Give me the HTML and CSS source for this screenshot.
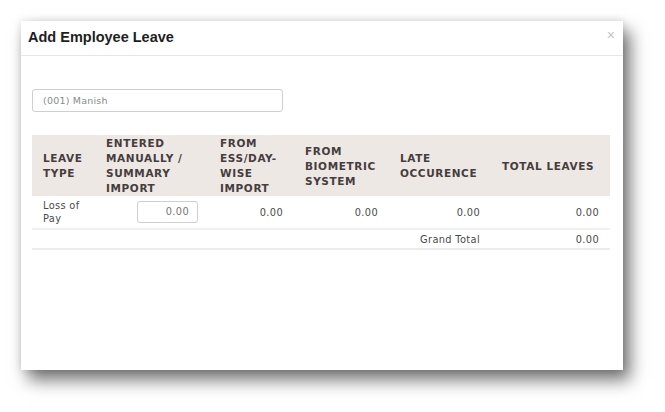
FILE: index.html
```html
<!DOCTYPE html>
<html>
<head>
<meta charset="utf-8">
<link rel="stylesheet" href="styles.css">
</head>
<body>
<div class="modal">
  <div class="modal-header">
    <h1 class="modal-title">Add Employee Leave</h1>
    <span class="close">&times;</span>
  </div>
  <div class="modal-body">
    <div class="emp-input">(001) Manish</div>
    <table class="leave-table">
      <colgroup>
        <col class="c1"><col class="c2"><col class="c3"><col class="c4"><col class="c5"><col class="c6">
      </colgroup>
      <thead>
        <tr>
          <th>LEAVE<br>TYPE</th>
          <th>ENTERED<br>MANUALLY /<br>SUMMARY<br>IMPORT</th>
          <th>FROM<br>ESS/DAY-<br>WISE<br>IMPORT</th>
          <th>FROM<br>BIOMETRIC<br>SYSTEM</th>
          <th>LATE<br>OCCURENCE</th>
          <th>TOTAL LEAVES</th>
        </tr>
      </thead>
      <tbody>
        <tr class="data-row">
          <td class="type">Loss of<br>Pay</td>
          <td class="num"><span class="num-input">0.00</span></td>
          <td class="num">0.00</td>
          <td class="num">0.00</td>
          <td class="num">0.00</td>
          <td class="num">0.00</td>
        </tr>
        <tr class="total-row">
          <td></td><td></td><td></td><td></td>
          <td class="num">Grand Total</td>
          <td class="num">0.00</td>
        </tr>
      </tbody>
    </table>
  </div>
</div>
</body>
</html>
```
FILE: styles.css
```css
html, body {
  margin: 0;
  padding: 0;
  background: #ffffff;
}
body {
  padding: 21px 42px 42px 21px;
  font-family: "DejaVu Sans", "Open Sans", sans-serif;
}
.modal {
  width: 602px;
  height: 349px;
  background: #fff;
  box-shadow: 7px 10px 16px rgba(0,0,0,0.55), 0 0 8px rgba(0,0,0,0.12);
  box-sizing: border-box;
}
.modal-header {
  height: 35px;
  border-bottom: 1px solid #e6e6e6;
  display: flex;
  align-items: center;
  justify-content: space-between;
  padding: 0 8px 0 7px;
  box-sizing: border-box;
}
.modal-title {
  margin: 0 0 2px 0;
  font-family: "Liberation Sans", Arial, sans-serif;
  font-weight: bold;
  font-size: 14.5px;
  color: #1e1e1e;
}
.close {
  color: #c4c4c4;
  font-size: 14px;
  line-height: 1;
  margin-top: -6px;
  font-family: "Liberation Sans", Arial, sans-serif;
}
.modal-body {
  padding: 33px 12px 0 11px;
}
.emp-input {
  width: 251px;
  height: 23px;
  box-sizing: border-box;
  border: 1px solid #cfcfcf;
  border-radius: 3px;
  padding: 0 10px;
  font-size: 9.5px;
  line-height: 21px;
  color: #8a8a8a;
  letter-spacing: 0.2px;
}
.leave-table {
  margin-top: 23px;
  width: 578px;
  border-collapse: collapse;
  table-layout: fixed;
}
.c1 { width: 63px; }
.c2 { width: 114px; }
.c3 { width: 85px; }
.c4 { width: 95px; }
.c5 { width: 102px; }
.c6 { width: 119px; }
.leave-table th {
  background: #eee8e4;
  color: #453d3d;
  font-size: 10.5px;
  font-weight: 600;
  text-align: left;
  line-height: 15px;
  height: 60px;
  padding: 1px 4px 0 11px;
  letter-spacing: 0.6px;
  vertical-align: middle;
  white-space: nowrap;
}
.leave-table td {
  font-size: 9.8px;
  color: #4a4a4a;
  padding: 0 11px;
  letter-spacing: 0.35px;
}
.data-row td {
  height: 32px;
  border-bottom: 2px solid #f0f0f0;
}
.total-row td {
  height: 18px;
  border-bottom: 2px solid #ececec;
}
.type {
  line-height: 13px;
}
.num {
  text-align: right;
}
.num-input {
  display: inline-block;
  width: 61px;
  height: 22px;
  box-sizing: border-box;
  border: 1px solid #cfcfcf;
  border-radius: 3px;
  padding: 0 8px;
  line-height: 20px;
  color: #777;
  text-align: right;
  vertical-align: middle;
}
```
